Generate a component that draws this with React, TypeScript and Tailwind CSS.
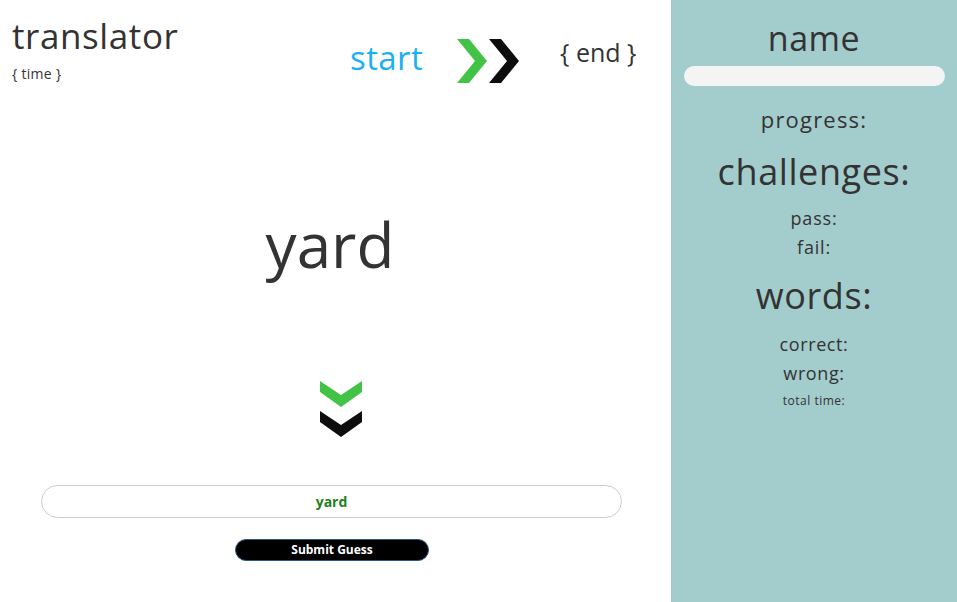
import React from "react";

function Chevron({ color, className }: { color: string; className?: string }) {
  return (
    <svg viewBox="0 0 30 44" className={className}>
      <polygon points="0,0 12,0 30,22 12,44 0,44 18,22" fill={color} />
    </svg>
  );
}

function DownChevron({ color }: { color: string }) {
  return (
    <svg viewBox="0 0 42 26" width="42" height="26" className="block">
      <polygon points="0,0 21,14 42,0 42,11 21,26 0,11" fill={color} />
    </svg>
  );
}

export default function App() {
  return (
    <div
      className="flex w-[957px] h-[602px] bg-white text-[#333333] overflow-hidden"
      style={{ fontFamily: '"Open Sans", "DejaVu Sans", sans-serif' }}
    >
      <div className="w-[671px] flex flex-col">
        <div className="flex items-start h-[100px]">
          <div className="pl-[12px] pt-[15px] w-[350px]">
            <div className="text-[35px] leading-[42px] tracking-[0.6px]">translator</div>
            <div className="text-[14px] leading-[18px] mt-[8px] tracking-[0.3px]">{"{ time }"}</div>
          </div>
          <div className="pt-[36px] text-[33px] leading-[44px] tracking-[0.4px] text-[#1ab0f5]">start</div>
          <div className="flex pt-[39px] ml-[34px]">
            <Chevron color="#43c346" className="w-[30px] h-[44px]" />
            <Chevron color="#0d0d0d" className="w-[30px] h-[44px] ml-[2px]" />
          </div>
          <div className="pt-[34px] ml-[41px] text-[25px] leading-[36px] font-medium">{"{ end }"}</div>
        </div>
        <div className="flex justify-center pt-[104px] text-[62px] leading-[80px] -ml-[11px]">yard</div>
        <div className="flex flex-col items-center gap-[4px] mt-[97px] ml-[10px]">
          <DownChevron color="#43c346" />
          <DownChevron color="#0d0d0d" />
        </div>
        <div className="mt-[48px] pl-[41px] w-[622px]">
          <div className="h-[33px] rounded-full border border-[#cccccc] flex items-center justify-center text-[14px] font-bold text-[#1f7f1f]">
            yard
          </div>
        </div>
        <div className="flex justify-center mt-[21px] -ml-[7px]">
          <button className="w-[194px] h-[22px] rounded-full bg-black border border-[#2b5a8a] text-white text-[12px] font-bold leading-[18px]">
            Submit Guess
          </button>
        </div>
      </div>
      <div className="w-[286px] bg-[#a3cccd] flex flex-col items-center">
        <div className="text-[34px] leading-[40px] mt-[18px] tracking-[0.5px]">name</div>
        <div className="w-[261px] h-[20px] rounded-full bg-[#f4f4f4] mt-[8px]" />
        <div className="text-[22px] leading-[28px] mt-[19px] tracking-[1.2px]">progress:</div>
        <div className="text-[36px] leading-[44px] mt-[17px] tracking-[0.6px]">challenges:</div>
        <div className="text-[18px] leading-[24px] mt-[12px] tracking-[0.8px]">pass:</div>
        <div className="text-[18px] leading-[24px] mt-[5px] tracking-[0.8px]">fail:</div>
        <div className="text-[36px] leading-[44px] mt-[15px] tracking-[0.6px]">words:</div>
        <div className="text-[18px] leading-[26px] mt-[13px] tracking-[0.6px]">correct:</div>
        <div className="text-[18px] leading-[26px] mt-[3px] tracking-[0.6px]">wrong:</div>
        <div className="text-[12px] leading-[16px] mt-[7px] tracking-[0.5px]">total time:</div>
      </div>
    </div>
  );
}
